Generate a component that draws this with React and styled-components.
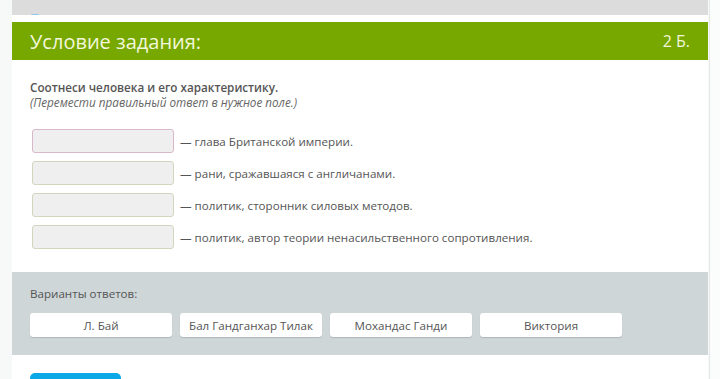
import React from "react";
import styled, { createGlobalStyle } from "styled-components";

const Global = createGlobalStyle`
  html, body { margin: 0; padding: 0; }
  body {
    background: #f7f8f8;
    font-family: "Open Sans", "Noto Sans", sans-serif;
    overflow: hidden;
  }
`;

const Page = styled.div`
  display: flex;
  width: 720px;
  height: 379px;
  overflow: hidden;
`;

const Gutter = styled.div`
  width: 12px;
  flex: none;
`;

const Panel = styled.div`
  width: 696px;
  flex: none;
  background: #ffffff;
  display: flex;
  flex-direction: column;
  & > * { flex: none; }
`;

const RightEdge = styled.div`
  flex: 1;
  margin-left: 1px;
  border-left: 1px solid #e6e8e8;
  background: #fbfcfc;
`;

const TopBar = styled.div`
  height: 15px;
  background: #dcdcdc;
  overflow: hidden;
  display: flex;
  align-items: flex-end;
  padding-left: 18px;
`;

const TopLink = styled.span`
  font-size: 13px;
  line-height: 13px;
  color: #8cc6ea;
  margin-bottom: -10px;
`;

const Header = styled.div`
  margin-top: 7px;
  height: 38px;
  background: #77a800;
  display: flex;
  align-items: center;
  justify-content: space-between;
  padding: 0 18px 0 18px;
  color: #f2f7dc;
`;

const Title = styled.h2`
  margin: 0;
  font-weight: 400;
  font-size: 20px;
`;

const Points = styled.span`
  font-size: 16px;
`;

const Body = styled.div`
  padding: 20px 18px 23px;
  display: flex;
  flex-direction: column;
`;

const Task = styled.div`
  font-size: 11.7px;
  font-weight: 600;
  color: #555;
  line-height: 15px;
`;

const Hint = styled.div`
  font-size: 11.7px;
  font-style: italic;
  color: #666;
  line-height: 15px;
`;

const Rows = styled.div`
  margin-top: 19px;
  display: flex;
  flex-direction: column;
  gap: 8px;
`;

const Row = styled.div`
  display: flex;
  align-items: center;
  gap: 6px;
  padding-left: 2px;
`;

const Drop = styled.div`
  width: 140px;
  height: 22px;
  border: 1px solid ${(p) => (p.$active ? "#d9b9c9" : "#d5d5bf")};
  border-radius: 3px;
  background: #efefef;
`;

const RowText = styled.span`
  font-size: 11.6px;
  color: #555;
`;

const Options = styled.div`
  background: #ced6d8;
  padding: 14px 18px 18px;
  display: flex;
  flex-direction: column;
  gap: 11px;
`;

const OptionsLabel = styled.div`
  font-size: 11.6px;
  color: #555;
  line-height: 16px;
`;

const OptionList = styled.div`
  display: flex;
  gap: 8px;
`;

const Option = styled.div`
  width: 142px;
  height: 24px;
  background: #fff;
  border-radius: 3px;
  box-shadow: 0 1px 1px rgba(0, 0, 0, 0.15);
  display: flex;
  align-items: center;
  justify-content: center;
  font-size: 11.6px;
  color: #555;
`;

const Footer = styled.div`
  padding: 18px 18px 0;
`;

const Submit = styled.div`
  width: 91px;
  height: 20px;
  background: #0aa8e6;
  border-radius: 5px 5px 0 0;
`;

const rows = [
  { text: "— глава Британской империи.", active: true },
  { text: "— рани, сражавшаяся с англичанами." },
  { text: "— политик, сторонник силовых методов." },
  { text: "— политик, автор теории ненасильственного сопротивления." },
];

const options = ["Л. Бай", "Бал Гандганхар Тилак", "Мохандас Ганди", "Виктория"];

export default function App() {
  return (
    <>
      <Global />
      <Page>
        <Gutter />
        <Panel>
          <TopBar>
            <TopLink>Предыдущее задание</TopLink>
          </TopBar>
          <Header>
            <Title>Условие задания:</Title>
            <Points>2 Б.</Points>
          </Header>
          <Body>
            <Task>Соотнеси человека и его характеристику.</Task>
            <Hint>(Перемести правильный ответ в нужное поле.)</Hint>
            <Rows>
              {rows.map((r) => (
                <Row key={r.text}>
                  <Drop $active={r.active} />
                  <RowText>{r.text}</RowText>
                </Row>
              ))}
            </Rows>
          </Body>
          <Options>
            <OptionsLabel>Варианты ответов:</OptionsLabel>
            <OptionList>
              {options.map((o) => (
                <Option key={o}>{o}</Option>
              ))}
            </OptionList>
          </Options>
          <Footer>
            <Submit />
          </Footer>
        </Panel>
        <RightEdge />
      </Page>
    </>
  );
}
